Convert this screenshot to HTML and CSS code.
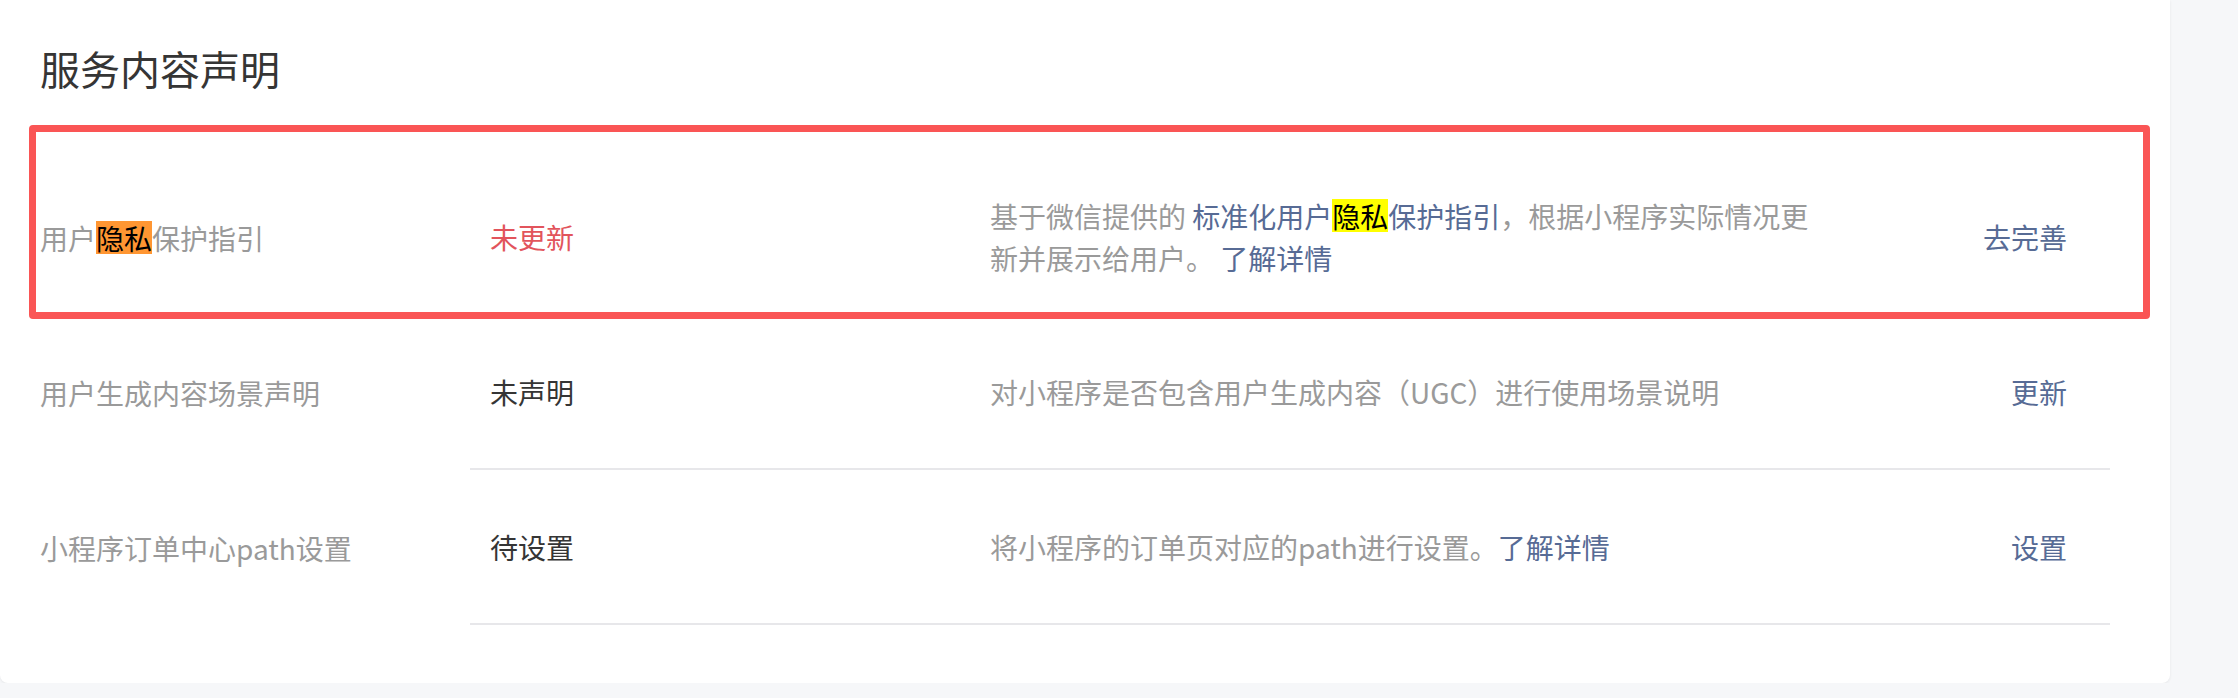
FILE: index.html
```html
<!DOCTYPE html>
<html>
<head>
  <meta charset="utf-8">
  <title>服务内容声明</title>
  <link rel="stylesheet" href="styles.css">
</head>
<body>
  <section class="card">
    <h1 class="card-title">服务内容声明</h1>

    <div class="decl-table">
      <div class="decl-row">
        <div class="decl-label">用户<mark class="find-current">隐私</mark>保护指引</div>
        <div class="decl-body">
          <div class="decl-status status-warn">未更新</div>
          <div class="decl-desc">基于微信提供的 <a href="#">标准化用户<mark class="find-hit">隐私</mark>保护指引</a>，根据小程序实际情况更新并展示给用户。 <a href="#">了解详情</a></div>
          <div class="decl-action"><a href="#">去完善</a></div>
        </div>
      </div>

      <div class="decl-row">
        <div class="decl-label">用户生成内容场景声明</div>
        <div class="decl-body">
          <div class="decl-status">未声明</div>
          <div class="decl-desc">对小程序是否包含用户生成内容（UGC）进行使用场景说明</div>
          <div class="decl-action"><a href="#">更新</a></div>
        </div>
      </div>

      <div class="decl-row">
        <div class="decl-label">小程序订单中心path设置</div>
        <div class="decl-body">
          <div class="decl-status">待设置</div>
          <div class="decl-desc">将小程序的订单页对应的path进行设置。<a href="#">了解详情</a></div>
          <div class="decl-action"><a href="#">设置</a></div>
        </div>
      </div>

      <!-- annotation drawn over the first row -->
      <div class="callout"></div>
    </div>
  </section>

  <div class="watermark">
    <span>VYcSoi83Q</span><span>VYcSoi83Q</span><span>VYcSoi83Q</span><span>VYcSoi83Q</span><span>VYcSoi83Q</span><span>VYcSoi83Q</span>
    <span>VYcSoi83Q</span><span>VYcSoi83Q</span><span>VYcSoi83Q</span><span>VYcSoi83Q</span><span>VYcSoi83Q</span><span>VYcSoi83Q</span>
    <span>VYcSoi83Q</span><span>VYcSoi83Q</span><span>VYcSoi83Q</span><span>VYcSoi83Q</span><span>VYcSoi83Q</span><span>VYcSoi83Q</span>
    <span>VYcSoi83Q</span><span>VYcSoi83Q</span><span>VYcSoi83Q</span><span>VYcSoi83Q</span><span>VYcSoi83Q</span><span>VYcSoi83Q</span>
    <span>VYcSoi83Q</span><span>VYcSoi83Q</span><span>VYcSoi83Q</span><span>VYcSoi83Q</span><span>VYcSoi83Q</span><span>VYcSoi83Q</span>
    <span>VYcSoi83Q</span><span>VYcSoi83Q</span><span>VYcSoi83Q</span><span>VYcSoi83Q</span><span>VYcSoi83Q</span><span>VYcSoi83Q</span>
    <span>VYcSoi83Q</span><span>VYcSoi83Q</span><span>VYcSoi83Q</span><span>VYcSoi83Q</span><span>VYcSoi83Q</span><span>VYcSoi83Q</span>
  </div>
</body>
</html>
```

FILE: styles.css
```css
body {
  margin: 0;
  padding: 0;
  background-color: #f6f7f9;
  font-family: "Noto Sans CJK SC", "Noto Sans", sans-serif;
  color: #353535;
}

a {
  color: #576b95;
  text-decoration: none;
}

/* find-in-page style highlights */
mark {
  color: #000;
  background-color: transparent;
  background-repeat: no-repeat;
  background-position: center;
  background-size: 100% 33px;
}

mark.find-current {
  background-image: linear-gradient(#ff9632, #ff9632);
}

mark.find-hit {
  background-image: linear-gradient(#ffff00, #ffff00);
}

.card {
  width: 2170px;
  box-sizing: border-box;
  padding: 40px 60px 58px 0;
  background-color: #fff;
  border-radius: 0 0 8px 8px;
  box-shadow: 0 1px 3px rgba(0, 0, 0, .07);
}

.card-title {
  margin: 0 0 64px 40px;
  font-size: 40px;
  line-height: 56px;
  font-weight: normal;
  color: #353535;
}

.decl-table {
  position: relative;
}

.decl-row {
  display: grid;
  grid-template-columns: 470px 1fr;
  height: 155px;
  font-size: 28px;
  line-height: 42px;
}

.decl-label {
  display: flex;
  align-items: center;
  padding-left: 40px;
  color: #9a9a9a;
}

.decl-body {
  display: grid;
  grid-template-columns: 520px 834px 1fr;
  align-items: center;
  border-bottom: 2px solid #e7e7ea;
}

.decl-status {
  padding-left: 20px;
}

.status-warn {
  color: #e2545c;
}

.decl-desc {
  color: #9a9a9a;
}

.decl-action {
  text-align: right;
  padding-right: 43px;
}

.callout {
  position: absolute;
  top: -35px;
  left: 29px;
  width: 2121px;
  height: 194px;
  box-sizing: border-box;
  border: 7px solid #fa5555;
  border-radius: 4px;
  pointer-events: none;
}

/* faint tiled watermark over the whole page */
.watermark {
  position: absolute;
  top: 73px;
  left: 150px;
  display: grid;
  grid-template-columns: repeat(6, 353px);
  grid-auto-rows: 92.5px;
  font-family: "Liberation Sans", sans-serif;
  font-size: 27px;
  line-height: 27px;
  color: rgba(0, 0, 0, .025);
  pointer-events: none;
  user-select: none;
}
```
